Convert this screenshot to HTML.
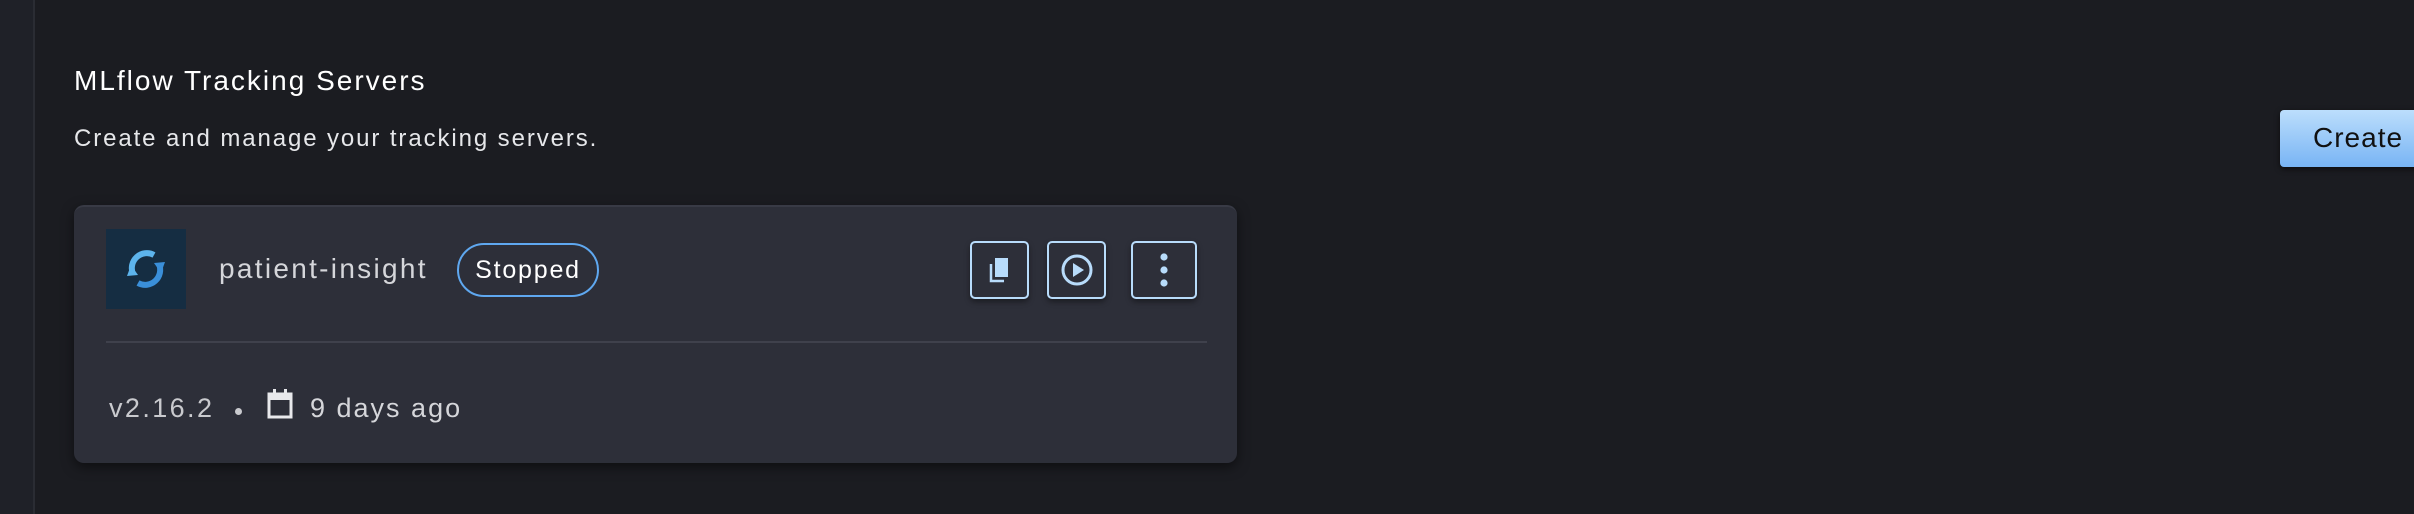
<!DOCTYPE html>
<html><head><style>
body{margin:0;width:2414px;height:514px;background:#1b1c21;font-family:"Liberation Sans",sans-serif;position:relative;overflow:hidden}
.side{position:absolute;left:0;top:0;width:33px;height:514px;background:#1f2128;border-right:2px solid #2a2c33}
.t{position:absolute;color:#fff;white-space:nowrap}
.card{position:absolute;left:74px;top:205px;width:1163px;height:258px;background:#2d2f39;border-radius:10px;box-shadow:0 4px 12px rgba(0,0,0,.5);border-top:2px solid #383a45;box-sizing:border-box}
.btn{position:absolute;top:241px;height:58px;border:2px solid #b8dcfb;border-radius:5px;box-sizing:border-box;box-shadow:0 3px 6px rgba(0,0,0,.4);display:flex;align-items:center;justify-content:center}
</style></head><body>
<div class="side"></div>
<div class="t" style="left:74px;top:65px;font-size:28px;letter-spacing:2px">MLflow Tracking Servers</div>
<div class="t" style="left:74px;top:125px;font-size:24px;color:#e6e7ea;letter-spacing:1.9px">Create and manage your tracking servers.</div>
<div class="card"></div>
<div style="position:absolute;left:106px;top:229px;width:80px;height:80px;background:#152d42;display:flex;align-items:center;justify-content:center">
<svg width="44" height="44" viewBox="0 0 44 44"><path d="M30 8 A15 15 0 0 0 9 27" fill="none" stroke="#5db4ec" stroke-width="6"/><path d="M14 36 A15 15 0 0 0 35 17" fill="none" stroke="#3a8fd9" stroke-width="6"/><path d="M7 18 L14 28 L3 29Z" fill="#5db4ec"/><path d="M37 26 L30 16 L41 15Z" fill="#3a8fd9"/></svg></div>
<div class="t" style="left:219px;top:253px;font-size:28px;color:#d5d6da;letter-spacing:2.3px">patient-insight</div>
<div style="position:absolute;left:457px;top:243px;width:142px;height:54px;border:2px solid #5fa8f0;border-radius:27px;box-sizing:border-box;color:#fff;font-size:25px;letter-spacing:1.8px;display:flex;align-items:center;justify-content:center">Stopped</div>
<div class="btn" style="left:970px;width:59px"><svg width="26" height="30" viewBox="0 0 26 30"><rect x="8" y="3" width="13" height="19" fill="#b8dcfb"/><path d="M4 9 V26 H17" fill="none" stroke="#b8dcfb" stroke-width="2.5"/></svg></div>
<div class="btn" style="left:1047px;width:59px"><svg width="34" height="34" viewBox="0 0 34 34"><circle cx="17" cy="17" r="14" fill="none" stroke="#b8dcfb" stroke-width="3"/><path d="M13 10 L24 17 L13 24Z" fill="#b8dcfb"/></svg></div>
<div class="btn" style="left:1131px;width:66px"><svg width="10" height="34" viewBox="0 0 10 34"><circle cx="5" cy="4" r="3.6" fill="#b8dcfb"/><circle cx="5" cy="17" r="3.6" fill="#b8dcfb"/><circle cx="5" cy="30" r="3.6" fill="#b8dcfb"/></svg></div>
<div style="position:absolute;left:106px;top:341px;width:1101px;height:2px;background:#3f414c"></div>
<div class="t" style="left:109px;top:393px;font-size:27px;color:#c9cace;letter-spacing:2.4px">v2.16.2</div>
<div style="position:absolute;left:235px;top:408px;width:7px;height:7px;border-radius:50%;background:#c9cace"></div>
<svg style="position:absolute;left:266px;top:388px" width="28" height="32" viewBox="0 0 28 32"><rect x="3" y="6" width="22" height="23" fill="none" stroke="#e8e9ec" stroke-width="3"/><rect x="3" y="6" width="22" height="6" fill="#e8e9ec"/><rect x="7" y="1" width="3" height="7" fill="#e8e9ec"/><rect x="18" y="1" width="3" height="7" fill="#e8e9ec"/></svg>
<div class="t" style="left:310px;top:393px;font-size:27px;color:#d5d6da;letter-spacing:2px">9 days ago</div>
<div style="position:absolute;left:2280px;top:110px;width:160px;height:57px;border-radius:4px;background:linear-gradient(#bcdefc,#78b4f4);box-shadow:0 2px 6px rgba(0,0,0,.6)"><span style="position:absolute;left:33px;top:12px;font-size:28px;color:#111;letter-spacing:1px">Create</span></div>
</body></html>
